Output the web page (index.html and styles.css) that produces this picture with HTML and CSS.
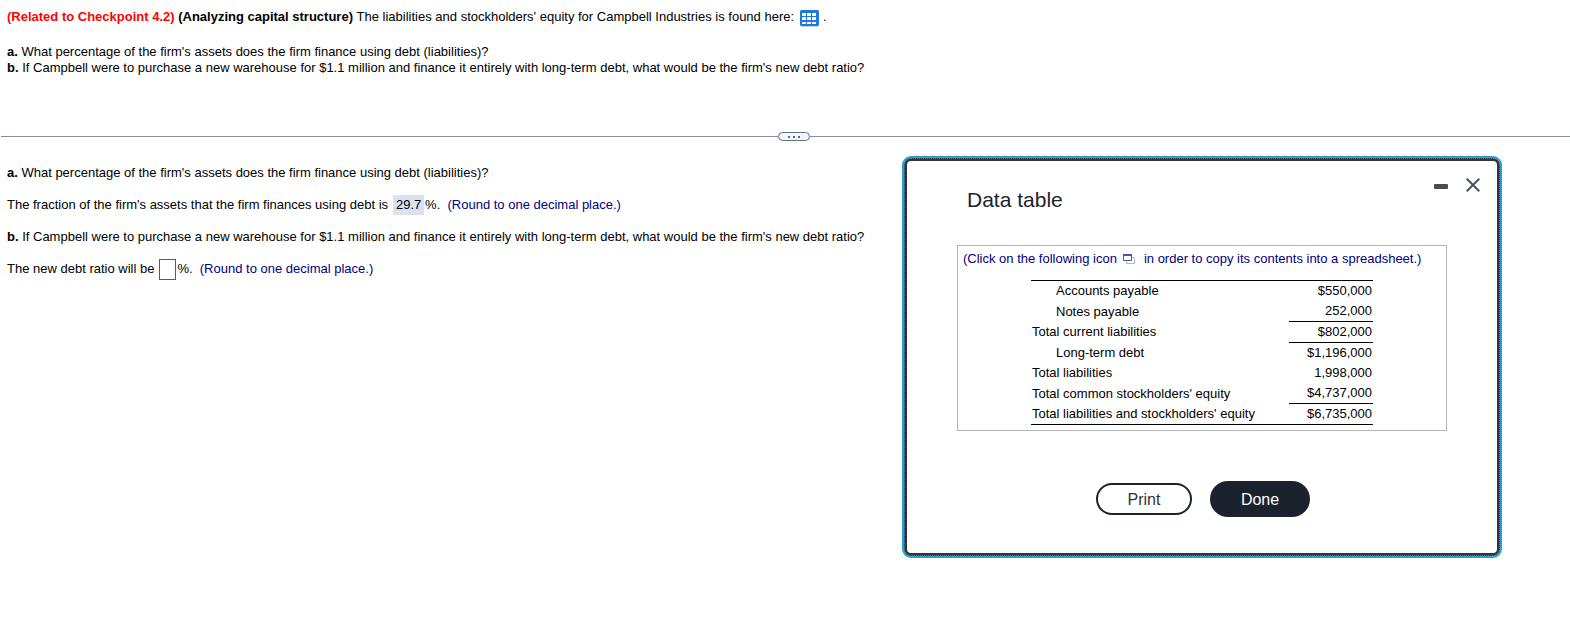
FILE: index.html
```html
<!DOCTYPE html>
<html lang="en">
<head>
    <meta charset="UTF-8">
    <meta name="viewport" content="width=device-width, initial-scale=1.0">
    <title>Analyzing capital structure</title>
    <link rel="stylesheet" href="styles.css">
</head>
<body>

    <!-- Question -->
    <div class="question">
        <p class="intro"><b class="related">(Related to Checkpoint 4.2)</b><b class="topic">(Analyzing capital structure)</b><span>The liabilities and stockholders' equity for Campbell Industries is found here:</span>
            <svg class="table-icon" width="19" height="17" viewBox="0 0 19 17">
                <rect width="19" height="16" rx="1.5" fill="#1f78dc"/>
                <path d="M1 16.5h17" stroke="#b9d5f5"/>
                <path d="M2 3h4v3H2zM7 3h4v3H7zM12 3h4v3h-4zM2 7h4v3H2zM7 7h4v3H7zM12 7h4v3h-4zM2 12h4v2H2zM7 12h4v2H7zM12 12h4v2h-4z" fill="#fff"/>
            </svg><span>.</span></p>
        <p><b>a.</b> What percentage of the firm's assets does the firm finance using debt (liabilities)?</p>
        <p><b>b.</b> If Campbell were to purchase a new warehouse for $1.1 million and finance it entirely with long-term debt, what would be the firm's new debt ratio?</p>
    </div>

    <!-- Divider with drag handle -->
    <div class="divider">
        <span class="rule"></span>
        <span class="handle"><i></i><i></i><i></i></span>
        <span class="rule"></span>
    </div>

    <div class="content">
        <!-- Answers -->
        <div class="answers">
            <p><b>a.</b><span>What percentage of the firm's assets does the firm finance using debt (liabilities)?</span></p>
            <p><span>The fraction of the firm's assets that the firm finances using debt is</span><span class="answer">29.7</span><span>%.</span><span class="hint">(Round to one decimal place.)</span></p>
            <p><b>b.</b><span>If Campbell were to purchase a new warehouse for $1.1 million and finance it entirely with long-term debt, what would be the firm's new debt ratio?</span></p>
            <p><span>The new debt ratio will be</span><span class="blank"></span><span>%.</span><span class="hint">(Round to one decimal place.)</span></p>
        </div>

        <!-- Data table window -->
        <div class="modal">
            <div class="modal-header">
                <h2>Data table</h2>
                <div class="controls">
                    <svg width="14" height="14" viewBox="0 0 14 14"><rect y="6" width="14" height="5" rx="1" fill="#4c4c4c"/></svg>
                    <svg width="14" height="14" viewBox="0 0 14 14"><path d="M.7.7l12.600 12.600M13.300.7L.7 13.300" stroke="#475260" stroke-width="2"/></svg>
                </div>
            </div>
            <div class="sheet">
                <p class="copy"><span>(Click on the following icon</span>
                    <svg class="copy-icon" width="12" height="10" viewBox="0 0 12 10">
                        <path d="M9 3.500h2.500v6h-8V7" fill="none" stroke="#aeb6d8"/>
                        <path d="M.5.5h8v6h-8z" fill="#fff" stroke="#4656a0"/>
                        <path d="M0 1h9" stroke="#4656a0" stroke-width="2"/>
                    </svg><span>in order to copy its contents into a spreadsheet.)</span></p>
                <table>
                    <tr><td class="indent">Accounts payable</td><td class="num">$550,000</td></tr>
                    <tr class="tall"><td class="indent low">Notes payable</td><td class="num line">252,000</td></tr>
                    <tr class="tall"><td>Total current liabilities</td><td class="num line">$802,000</td></tr>
                    <tr><td class="indent">Long-term debt</td><td class="num">$1,196,000</td></tr>
                    <tr><td>Total liabilities</td><td class="num">1,998,000</td></tr>
                    <tr class="tall"><td class="low">Total common stockholders' equity</td><td class="num line">$4,737,000</td></tr>
                    <tr><td>Total liabilities and stockholders' equity</td><td class="num">$6,735,000</td></tr>
                </table>
            </div>
            <div class="buttons">
                <button class="print">Print</button>
                <button class="done">Done</button>
            </div>
        </div>
    </div>

</body>
</html>
```
FILE: styles.css
```css
body {
    margin: 0;
    height: 618px;
    overflow: hidden;
    background: #fff;
    color: #000;
    font-family: "Liberation Sans", Arial, sans-serif;
    font-size: 13px;
    line-height: 16px;
}

p,
h2 {
    margin: 0;
    white-space: nowrap;
}

/* Question */
.question {
    height: 123px;
    padding: 9px 7px 0;
}

.intro {
    display: flex;
    height: 35px;
}

.related {
    color: #f00;
    margin-right: 3.6px;
}

.topic {
    margin-right: 3.6px;
}

.table-icon {
    margin: 1px 4px 0 6px;
}

/* Divider */
.divider {
    display: flex;
    align-items: center;
    height: 9px;
    padding-left: 1px;
}

.rule {
    height: 1px;
    width: 777px;
    background: #868ca3;
}

.rule:last-child {
    flex: 1;
}

.handle {
    box-sizing: border-box;
    display: flex;
    align-items: center;
    justify-content: center;
    gap: 3px;
    width: 32px;
    height: 9px;
    border: 1px solid #5d7080;
    border-radius: 5px;
    background: #f3f5f6;
}

.handle i {
    width: 2px;
    height: 2px;
    background: #5d6670;
}

/* Answers */
.content {
    display: flex;
}

.answers {
    width: 895px;
    padding: 16px 0 0 7px;
}

.answers p {
    display: flex;
    height: 32px;
    line-height: 32px;
}

.answers b {
    margin-right: 3.6px;
}

.answer {
    width: 31px;
    height: 20px;
    margin: 6px 1px 0 5px;
    line-height: 20px;
    text-align: center;
    background: #d9e2f1;
}

.blank {
    box-sizing: border-box;
    width: 17px;
    height: 21px;
    margin: 6px 1px 0 5px;
    border: 1px solid #2a5fc9;
}

.hint {
    margin-left: 7.2px;
    color: #000080;
}

/* Data table window */
.modal {
    box-sizing: border-box;
    width: 596px;
    height: 398px;
    margin: 17px 0 0 2px;
    border: 3px solid #333;
    border-radius: 7px;
    outline: 1px dotted #2596d1;
    outline-offset: -1px;
    box-shadow: 0 0 0 2px #22a1e2;
}

.modal-header {
    display: flex;
    justify-content: space-between;
    height: 84px;
    padding-left: 60px;
}

.modal-header h2 {
    padding-top: 27px;
    font-size: 21px;
    font-weight: normal;
    line-height: 24px;
    color: #1c222d;
}

.controls {
    display: flex;
    gap: 18px;
    padding: 17px 17px 0 0;
}

.sheet {
    box-sizing: border-box;
    width: 490px;
    height: 186px;
    margin-left: 50px;
    border: 1px solid #b4b4b4;
}

.copy {
    display: flex;
    height: 34px;
    padding: 5px 0 0 5px;
    box-sizing: border-box;
    color: #000080;
}

.copy-icon {
    margin: 3px 9px 0 6px;
}

table {
    width: 342px;
    margin-left: 73px;
    border-collapse: separate;
    border-spacing: 0;
    border-top: 1px solid #000;
    border-bottom: 1px solid #000;
}

td {
    height: 20px;
    padding: 0 0 0 1px;
    box-sizing: border-box;
    line-height: 20px;
    vertical-align: top;
    white-space: nowrap;
}

.tall td {
    height: 21px;
}

td.indent {
    padding-left: 25px;
}

td.low {
    padding-top: 1px;
}

td.num {
    width: 84px;
    padding-right: 1px;
    text-align: right;
}

.line {
    border-bottom: 1px solid #000;
}

.buttons {
    display: flex;
    align-items: center;
    gap: 18px;
    margin: 50px 0 0 189px;
}

button {
    box-sizing: border-box;
    padding: 1px 0 0;
    border-radius: 18px;
    font-family: inherit;
    font-size: 16px;
}

.print {
    width: 96px;
    height: 32px;
    border: 2px solid #1c222d;
    background: #fff;
    color: #333;
}

.done {
    width: 100px;
    height: 36px;
    border: none;
    background: #1c222d;
    color: #fff;
}
```
